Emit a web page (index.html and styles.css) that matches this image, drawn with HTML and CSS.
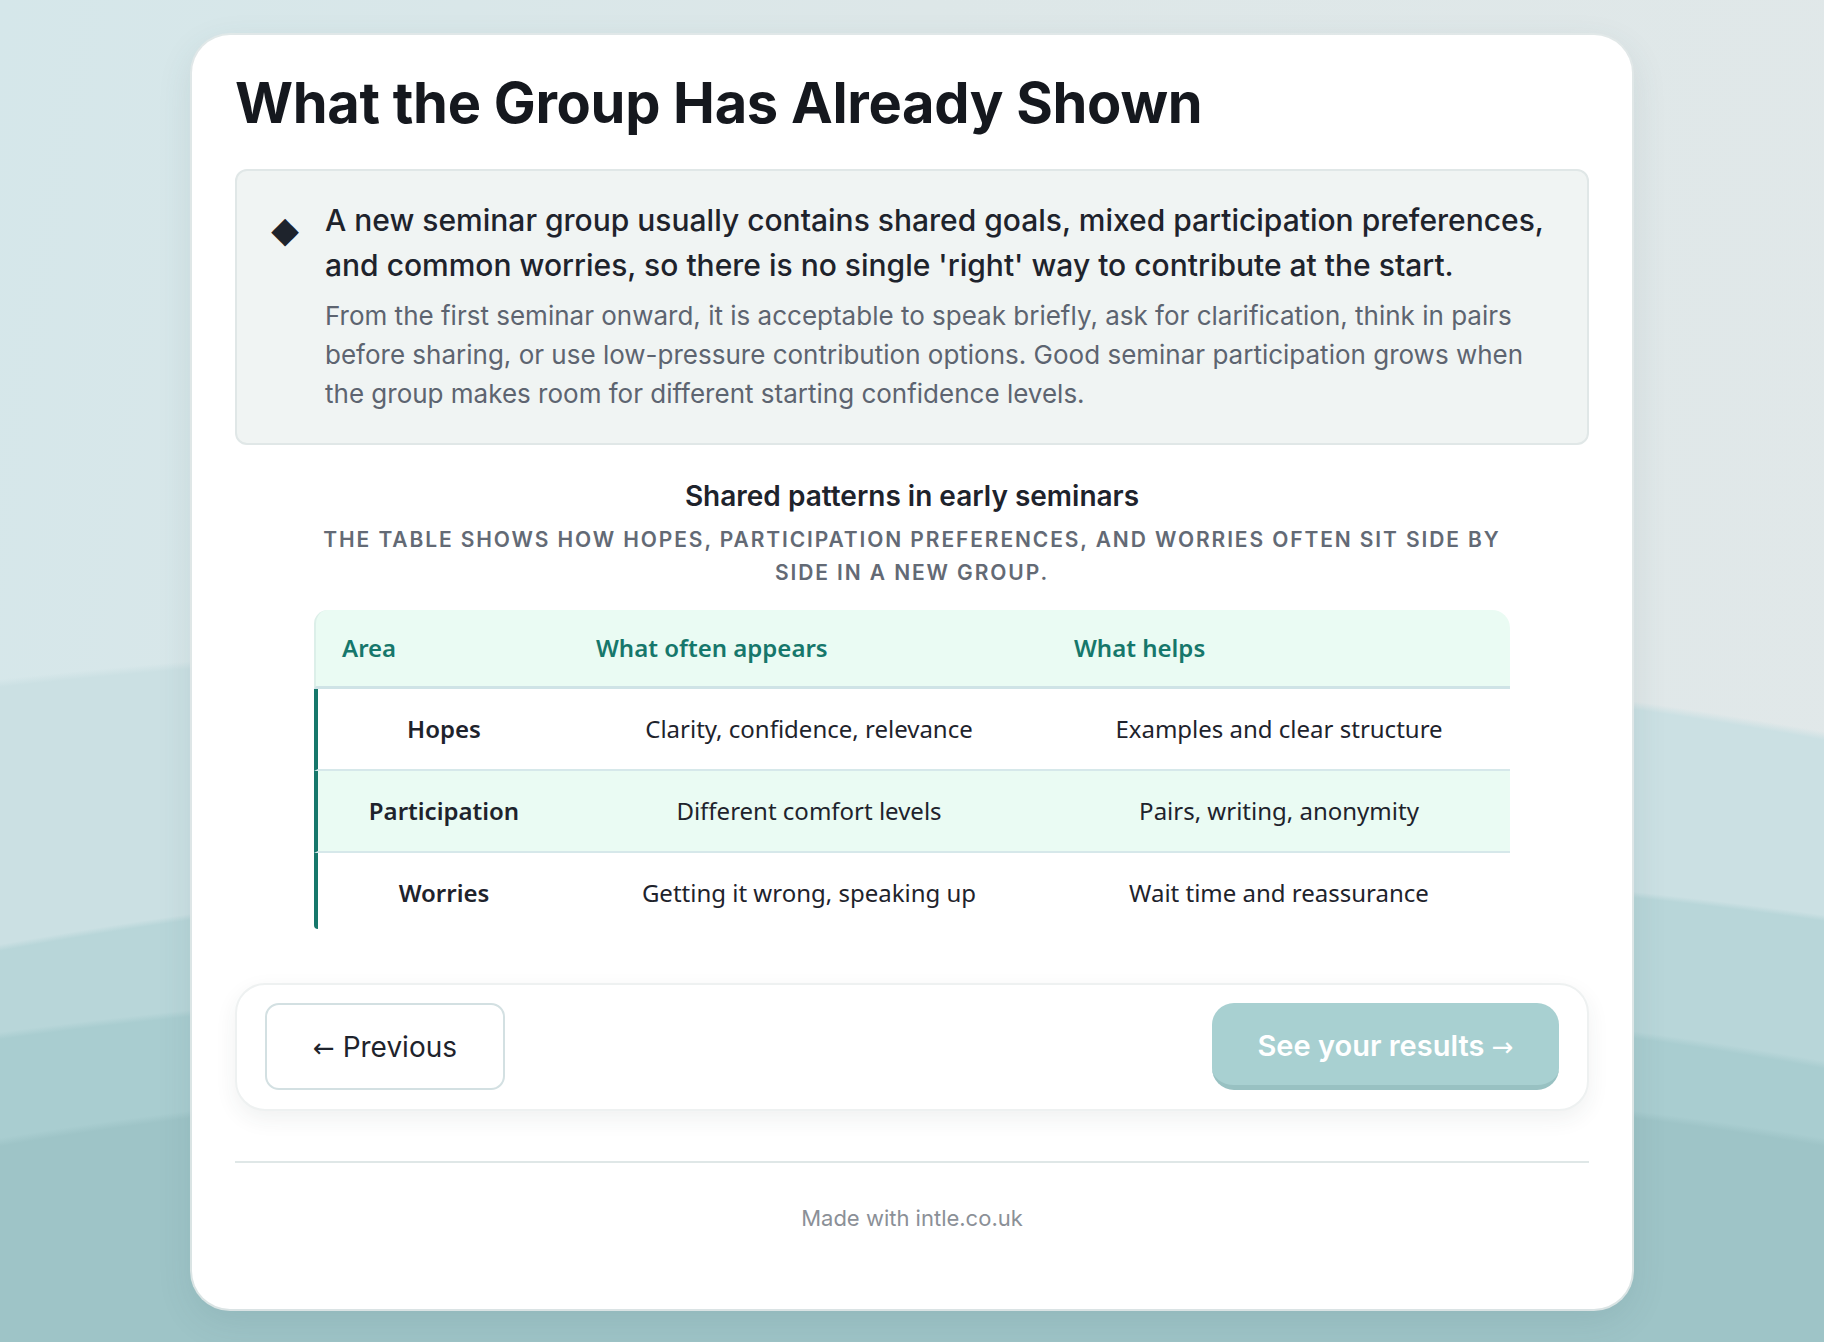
FILE: index.html
```html
<!DOCTYPE html>
<html lang="en">
<head>
<meta charset="utf-8">
<title>What the Group Has Already Shown</title>
<link rel="stylesheet" href="styles.css">
</head>
<body>
<main class="card">
  <h1 class="title">What the Group Has Already Shown</h1>

  <section class="callout">
    <span class="diamond">&#9670;</span>
    <div class="callout-body">
      <p class="lead">A new seminar group usually contains shared goals, mixed participation preferences, and common worries, so there is no single 'right' way to contribute at the start.</p>
      <p class="sub">From the first seminar onward, it is acceptable to speak briefly, ask for clarification, think in pairs before sharing, or use low-pressure contribution options. Good seminar participation grows when the group makes room for different starting confidence levels.</p>
    </div>
  </section>

  <section class="patterns">
    <h2 class="patterns-title">Shared patterns in early seminars</h2>
    <p class="patterns-caption">The table shows how hopes, participation preferences, and worries often sit side by side in a new group.</p>
    <table class="ptable">
      <thead>
        <tr><th class="c1">Area</th><th class="c2">What often appears</th><th class="c3">What helps</th></tr>
      </thead>
      <tbody>
        <tr><td class="area">Hopes</td><td>Clarity, confidence, relevance</td><td>Examples and clear structure</td></tr>
        <tr class="alt"><td class="area">Participation</td><td>Different comfort levels</td><td>Pairs, writing, anonymity</td></tr>
        <tr><td class="area">Worries</td><td>Getting it wrong, speaking up</td><td>Wait time and reassurance</td></tr>
      </tbody>
    </table>
  </section>

  <nav class="nav">
    <button class="btn btn-prev"><span class="arrow">&larr;</span> Previous</button>
    <button class="btn btn-next">See your results <span class="arrow">&rarr;</span></button>
  </nav>

  <hr class="divider">
  <footer class="footer">Made with intle.co.uk</footer>
</main>
</body>
</html>
```

FILE: styles.css
```css
* { box-sizing: border-box; }

html, body { height: 100%; }

body {
  margin: 0;
  font-family: "Inter", "Liberation Sans", sans-serif;
  color: #1e232c;
  background-color: #cfe2e4;
  background-image:
    radial-gradient(ellipse 1500px 330px at 50% 1400px, #9ec4c7 0 98%, rgba(158,196,199,0) 100%),
    radial-gradient(ellipse 1700px 420px at 45% 1400px, #a9cdd0 0 98.5%, rgba(169,205,208,0) 100%),
    radial-gradient(ellipse 1900px 560px at 55% 1420px, #b8d6d9 0 99%, rgba(184,214,217,0) 100%),
    radial-gradient(ellipse 2300px 760px at 40% 1400px, #cbe0e3 0 99%, rgba(203,224,227,0) 100%),
    linear-gradient(100deg, #d5e7ea 0%, #dde7e8 45%, #e1e8e9 100%);
  padding: 35px 0 33px;
}

.card {
  width: 1440px;
  margin: 0 auto;
  background: #ffffff;
  border-radius: 38px;
  box-shadow: 0 0 0 2px rgba(225, 232, 232, 0.9), 0 12px 36px rgba(60, 90, 95, 0.12);
  padding: 33px 43px 76px;
}

.title {
  margin: 0;
  font-size: 56px;
  line-height: 70px;
  font-weight: 700;
  letter-spacing: -0.3px;
  color: #15181e;
}

.callout {
  margin-top: 31px;
  display: flex;
  align-items: flex-start;
  gap: 26px;
  background: #f0f4f3;
  border: 2px solid #e0e7e7;
  border-radius: 12px;
  padding: 27px 34px 30px 34px;
}

.diamond {
  flex: none;
  font-size: 36px;
  line-height: 36px;
  margin-top: 14px;
  width: 28px;
  text-align: center;
  color: #1e232c;
  font-family: "DejaVu Sans", sans-serif;
}

.callout-body { flex: 1; min-width: 0; }

.lead {
  margin: 0;
  font-size: 30px;
  line-height: 45px;
  font-weight: 500;
  color: #1e232c;
}

.sub {
  margin: 8px 0 0;
  font-size: 26px;
  line-height: 39px;
  color: #5d6470;
}

.patterns {
  margin: 34px auto 0;
  width: 1196px;
  text-align: center;
}

.patterns-title {
  margin: 0;
  font-size: 28px;
  line-height: 34px;
  font-weight: 600;
  color: #1e232c;
}

.patterns-caption {
  margin: 10px 0 0;
  font-size: 21px;
  line-height: 33px;
  font-weight: 600;
  letter-spacing: 0.09em;
  text-transform: uppercase;
  color: #636a75;
}

.ptable {
  margin-top: 21px;
  width: 100%;
  border-collapse: separate;
  border-spacing: 0;
  table-layout: fixed;
  font-family: "Noto Sans", "Open Sans", sans-serif;
  font-size: 24px;
  line-height: 36px;
}

.ptable .c1 { width: 256px; }
.ptable .c2 { width: 478px; }

.ptable thead th {
  background: #eafbf3;
  color: #16776b;
  font-weight: 600;
  text-align: left;
  padding: 20px 26px;
  border-bottom: 3px solid #cfe3e6;
}

.ptable thead th:first-child {
  border-top-left-radius: 14px;
  border-left: 2px solid #dcefe9;
}

.ptable thead th:last-child { border-top-right-radius: 18px; }

.ptable tbody td {
  padding: 22px 16px;
  text-align: center;
  color: #1e232c;
  border-bottom: 2px solid #d6e8ea;
}

.ptable tbody tr:last-child td { border-bottom: 0; padding-bottom: 18px; }

.ptable tbody td:first-child { border-left: 4px solid #16776b; }

.ptable tbody tr:last-child td:first-child { border-bottom-left-radius: 4px; }

.ptable tbody tr.alt td { background: #eafbf3; }

.ptable td.area { font-weight: 600; }

.nav {
  margin-top: 54px;
  display: flex;
  justify-content: space-between;
  align-items: center;
  background: #ffffff;
  border: 2px solid #eef1f1;
  border-radius: 30px;
  box-shadow: 0 8px 22px rgba(40, 60, 60, 0.07);
  padding: 18px 28px 19px;
}

.btn {
  font-family: "Inter", "Liberation Sans", sans-serif;
  font-size: 28px;
  height: 87px;
  cursor: pointer;
}

.arrow {
  font-family: "DejaVu Sans", sans-serif;
  font-weight: 400;
  font-size: 26px;
}

.btn-prev {
  width: 240px;
  background: #ffffff;
  border: 2px solid #d3e0e2;
  border-radius: 14px;
  color: #1e232c;
  font-weight: 400;
}

.btn-next {
  width: 347px;
  background: #a8d0d1;
  border: 0;
  border-bottom: 5px solid #98c1c2;
  border-radius: 22px;
  color: #ffffff;
  font-weight: 600;
  font-size: 29px;
  padding-top: 4px;
}

.divider {
  margin: 50px 0 0;
  border: 0;
  height: 2px;
  background: #dfe7e7;
}

.footer {
  margin-top: 40px;
  text-align: center;
  font-size: 22px;
  line-height: 30px;
  color: #8b9097;
}
```
